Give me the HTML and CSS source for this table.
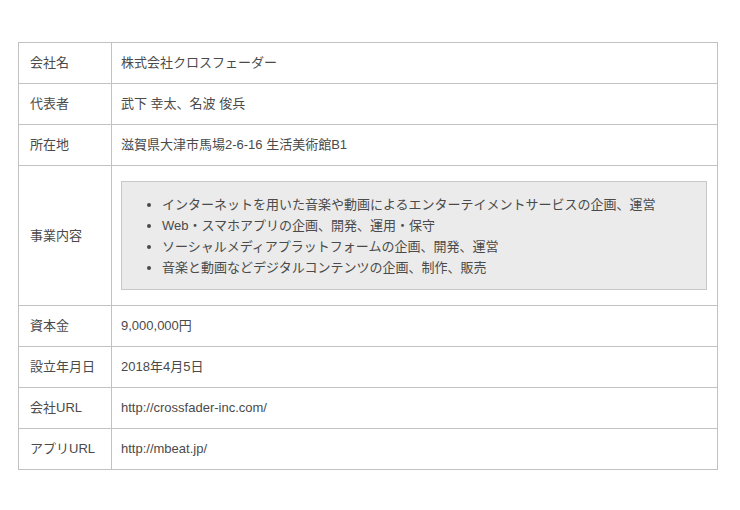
FILE: index.html
```html
<!DOCTYPE html>
<html lang="ja">
<head>
<meta charset="utf-8">
<title>会社概要</title>
<link rel="stylesheet" href="styles.css">
</head>
<body>
<div class="page">
<table class="info">
  <tr><th>会社名</th><td>株式会社クロスフェーダー</td></tr>
  <tr><th>代表者</th><td>武下 幸太、名波 俊兵</td></tr>
  <tr><th>所在地</th><td>滋賀県大津市馬場2-6-16 生活美術館B1</td></tr>
  <tr class="biz"><th>事業内容</th><td>
    <div class="box">
      <ul>
        <li>インターネットを用いた音楽や動画によるエンターテイメントサービスの企画、運営</li>
        <li>Web・スマホアプリの企画、開発、運用・保守</li>
        <li>ソーシャルメディアプラットフォームの企画、開発、運営</li>
        <li>音楽と動画などデジタルコンテンツの企画、制作、販売</li>
      </ul>
    </div>
  </td></tr>
  <tr><th>資本金</th><td>9,000,000円</td></tr>
  <tr><th>設立年月日</th><td>2018年4月5日</td></tr>
  <tr><th>会社URL</th><td>http://crossfader-inc.com/</td></tr>
  <tr><th>アプリURL</th><td>http://mbeat.jp/</td></tr>
</table>
</div>
</body>
</html>
```

FILE: styles.css
```css
html, body {
  margin: 0;
  padding: 0;
  background: #fff;
}
body {
  font-family: "Liberation Sans", "Noto Sans CJK JP", sans-serif;
  font-size: 13px;
  color: #4a4a4a;
}
.page {
  padding: 42px 0 0 18px;
}
.info {
  border-collapse: collapse;
  width: 700px;
}
.info th,
.info td {
  border: 1px solid #c2c2c2;
  height: 40px;
  padding: 0;
  vertical-align: middle;
  text-align: left;
  font-weight: normal;
  line-height: 20px;
}
.info th {
  width: 81px;
  padding-left: 11px;
}
.info td {
  padding-left: 9px;
  padding-right: 10px;
}
.info .biz td {
  padding-top: 15px;
  padding-bottom: 15px;
}
.box {
  background: #ebebeb;
  border: 1px solid #c8c8c8;
  padding: 12px 10px 11px;
}
.box ul {
  margin: 0;
  padding-left: 30px;
}
.box li {
  line-height: 21px;
}
```
